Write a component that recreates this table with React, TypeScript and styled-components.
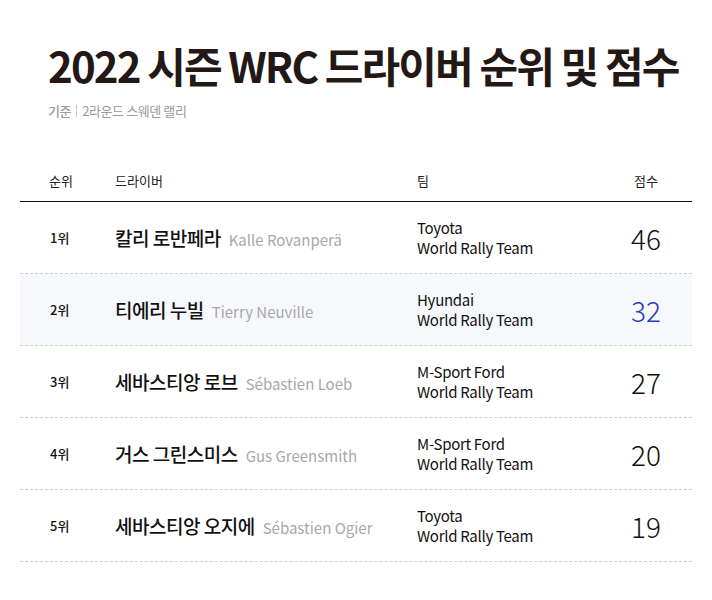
import React from "react"
import styled, { createGlobalStyle } from "styled-components"

const GlobalSt = createGlobalStyle`
  html, body {
    margin: 0;
    padding: 0;
    background: #fff;
    font-family: "Noto Sans CJK KR", "Noto Sans", sans-serif;
  }
`

const PageSt = styled.div`
  width: 712px;
  padding: 40px 20px 0 20px;
  box-sizing: border-box;
`

const TitleSt = styled.h1`
  margin: 0 0 0 28px;
  font-size: 42px;
  line-height: 50px;
  font-weight: 700;
  letter-spacing: -1.9px;
  white-space: nowrap;
  color: #231815;
`

const SubSt = styled.div`
  margin: 12px 0 0 28px;
  font-size: 13px;
  line-height: 18px;
  color: #9a9a9a;
  letter-spacing: -0.4px;
  display: flex;
  align-items: center;
  gap: 5px;
`

const SubLabelSt = styled.span`
  font-weight: 500;
`

const SepSt = styled.span`
  width: 1px;
  height: 12px;
  background: #c8c8c8;
`

const TableSt = styled.div`
  margin-top: 40px;
`

const GRID = '95px 302px 1fr 88px'

const HeadRowSt = styled.div`
  display: grid;
  grid-template-columns: ${GRID};
  height: 41px;
  align-items: center;
  border-bottom: 1px solid #111;
  font-size: 13px;
  color: #222;
`

const HeadCellSt = styled.div<{ $align?: string }>`
  text-align: ${p => p.$align || 'left'};
  padding-right: ${p => p.$align === 'center' ? '4px' : '0'};
  &:first-child { padding-left: 29px; }
`

const RowSt = styled.div<{ $alt?: boolean }>`
  display: grid;
  grid-template-columns: ${GRID};
  height: 71px;
  align-items: center;
  border-bottom: 1px dashed #c9ced8;
  background: ${p => p.$alt ? '#f7f8fc' : '#fff'};
`

const RankSt = styled.div`
  padding-left: 30px;
  font-size: 13px;
  font-weight: 500;
  color: #111;
`

const NameSt = styled.div`
  display: flex;
  align-items: baseline;
  gap: 8px;
  white-space: nowrap;
`

const KoNameSt = styled.span`
  font-size: 19px;
  font-weight: 500;
  color: #111;
  letter-spacing: -0.5px;
`

const EnNameSt = styled.span`
  font-size: 15px;
  color: #a8a8a8;
`

const TeamSt = styled.div`
  font-size: 15px;
  line-height: 20px;
  color: #111;
  letter-spacing: -0.3px;
`

const ScoreSt = styled.div<{ $hl?: boolean }>`
  font-size: 28px;
  font-weight: 300;
  color: ${p => p.$hl ? '#1f3fbf' : '#111'};
  text-align: center;
  padding-right: 4px;
`

const rows = [
  { rank: 1, ko: '칼리 로반페라', en: 'Kalle Rovanperä', team: ['Toyota', 'World Rally Team'], score: 46 },
  { rank: 2, ko: '티에리 누빌', en: 'Tierry Neuville', team: ['Hyundai', 'World Rally Team'], score: 32, hl: true },
  { rank: 3, ko: '세바스티앙 로브', en: 'Sébastien Loeb', team: ['M-Sport Ford', 'World Rally Team'], score: 27 },
  { rank: 4, ko: '거스 그린스미스', en: 'Gus Greensmith', team: ['M-Sport Ford', 'World Rally Team'], score: 20 },
  { rank: 5, ko: '세바스티앙 오지에', en: 'Sébastien Ogier', team: ['Toyota', 'World Rally Team'], score: 19 },
]

export default function App() {
  return <PageSt>
    <GlobalSt />
    <TitleSt>2022 시즌 WRC 드라이버 순위 및 점수</TitleSt>
    <SubSt>
      <SubLabelSt>기준</SubLabelSt>
      <SepSt />
      <span>2라운드 스웨덴 랠리</span>
    </SubSt>
    <TableSt>
      <HeadRowSt>
        <HeadCellSt>순위</HeadCellSt>
        <HeadCellSt>드라이버</HeadCellSt>
        <HeadCellSt>팀</HeadCellSt>
        <HeadCellSt $align="center">점수</HeadCellSt>
      </HeadRowSt>
      {rows.map((r, idx) =>
        <RowSt key={r.rank} $alt={idx === 1}>
          <RankSt>{r.rank}위</RankSt>
          <NameSt>
            <KoNameSt>{r.ko}</KoNameSt>
            <EnNameSt>{r.en}</EnNameSt>
          </NameSt>
          <TeamSt>{r.team[0]}<br />{r.team[1]}</TeamSt>
          <ScoreSt $hl={r.hl}>{r.score}</ScoreSt>
        </RowSt>
      )}
    </TableSt>
  </PageSt>
}
